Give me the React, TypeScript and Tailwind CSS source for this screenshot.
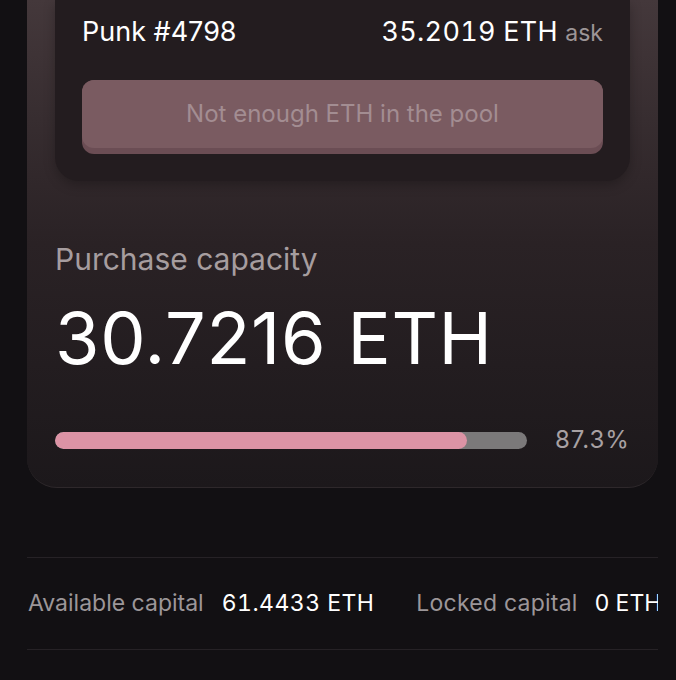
import React from "react";

export default function App() {
  return (
    <div className="w-[676px] h-[680px] overflow-hidden bg-[#121013] font-['Inter','Roboto',sans-serif]">
      <div className="ml-[27px] mr-[18px] rounded-b-[30px] bg-gradient-to-b from-[#44383b] via-[#2a2225] to-[#1c181b] border-b border-[#2e282b] px-[28px] pb-[29px]">
        <div className="rounded-b-[24px] bg-[#231c1f] px-[27px] pb-[27px] pt-[14px] shadow-[0_4px_12px_rgba(0,0,0,0.25)]">
          <div className="flex items-baseline justify-between text-white text-[27px] leading-[36px]">
            <span>Punk #4798</span>
            <span className="tabular-nums tracking-[0.01em]">
              35.2019 ETH <span className="text-[23px] text-[#9d9597] tracking-normal">ask</span>
            </span>
          </div>
          <div className="mt-[29px] h-[74px] rounded-[12px] bg-[#6b4d54] pb-[6px]">
            <div className="flex h-full items-center justify-center rounded-[12px] bg-[#7a5b61] text-[24px] text-[#a38d92]">
              Not enough ETH in the pool
            </div>
          </div>
        </div>
        <div className="mt-[60px] text-[30px] leading-[36px] text-[#a69d9f]">Purchase capacity</div>
        <div className="mt-[21px] text-[72px] leading-[80px] text-white tracking-[0.01em]">30.7216 ETH</div>
        <div className="mt-[44px] flex items-center">
          <div className="h-[17px] w-[472px] rounded-full bg-[#7b797a] overflow-hidden">
            <div className="h-full rounded-full bg-[#dc93a5]" style={{ width: "87.3%" }} />
          </div>
          <span className="ml-[28px] text-[24px] text-[#a8a1a3] tracking-[0.04em]">87.3%</span>
        </div>
      </div>
      <div className="ml-[27px] mr-[18px] mt-[69px] border-y border-[#262226] h-[93px] flex items-center whitespace-nowrap overflow-hidden text-[23px]">
        <span className="text-[#9c9699] ml-[1px]">Available capital</span>
        <span className="ml-[18px] text-white tabular-nums tracking-[0.02em]">61.4433 ETH</span>
        <span className="ml-[42px] text-[#9c9699] tracking-[0.01em]">Locked capital</span>
        <span className="ml-[17px] text-white">0 ETH</span>
      </div>
    </div>
  );
}
